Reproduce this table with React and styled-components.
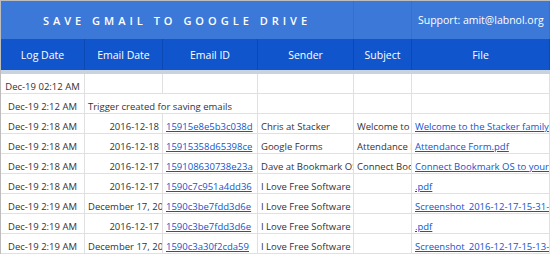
import React from 'react';
import styled, { createGlobalStyle } from 'styled-components';

const GlobalStyle = createGlobalStyle`
  html, body {
    margin: 0;
    padding: 0;
    background: #fff;
    overflow: hidden;
  }
  body {
    font-family: "Open Sans", "Liberation Sans", sans-serif;
  }
`;

const Sheet = styled.div`
  display: grid;
  grid-template-columns: 84px 78px 95px 96px 58px 1fr;
  width: 550px;
  border-top: 1px solid #bdbdbd;
  border-left: 1px solid #bdbdbd;
  box-sizing: border-box;
`;

const TitleCell = styled.div`
  grid-column: span ${props => props.span || 1};
  height: 38px;
  background: #3c78d8;
  color: #fff;
  display: flex;
  align-items: center;
  justify-content: ${props => props.left ? 'flex-start' : 'center'};
  padding: ${props => props.left ? '0 0 0 6px' : '0'};
  box-sizing: border-box;
  border-right: 1px solid #3a6fc6;
  font-size: ${props => props.left ? '10.5px' : '11px'};
  font-weight: ${props => props.left ? 400 : 600};
  letter-spacing: ${props => props.left ? '0' : '4px'};
  white-space: nowrap;
  overflow: hidden;
`;

const HeadCell = styled.div`
  height: 31px;
  background: #1155cc;
  color: #fff;
  display: flex;
  align-items: center;
  justify-content: center;
  font-size: 10.5px;
  border-right: 1px solid #0c49b4;
  box-sizing: border-box;
`;

const Band = styled.div`
  grid-column: 1 / -1;
  height: 4px;
  background: #c9d3e0;
`;

const Cell = styled.div`
  grid-column: span ${props => props.span || 1};
  height: 20px;
  box-sizing: border-box;
  border-right: 1px solid #e0e0e0;
  border-bottom: 1px solid #e0e0e0;
  font-size: 9.5px;
  line-height: 13px;
  color: #333;
  display: flex;
  align-items: flex-end;
  justify-content: ${props =>
    props.align === 'right' ? 'flex-end' : props.align === 'center' ? 'center' : 'flex-start'};
  padding: 0 3px;
  white-space: nowrap;
  overflow: hidden;
`;

const Link = styled.span`
  color: #1155cc;
  text-decoration: underline;
`;

const rows = [
  { log: 'Dec-19 02:12 AM' },
  { log: 'Dec-19 2:12 AM', note: 'Trigger created for saving emails' },
  { log: 'Dec-19 2:18 AM', date: '2016-12-18', id: '15915e8e5b3c038d', sender: 'Chris at Stacker', subject: 'Welcome to Stacker', file: 'Welcome to the Stacker family' },
  { log: 'Dec-19 2:18 AM', date: '2016-12-18', id: '15915358d65398ce', sender: 'Google Forms', subject: 'Attendance Form', file: 'Attendance Form.pdf' },
  { log: 'Dec-19 2:18 AM', date: '2016-12-17', id: '159108630738e23a', sender: 'Dave at Bookmark OS', subject: 'Connect Bookmark OS', file: 'Connect Bookmark OS to your browser' },
  { log: 'Dec-19 2:18 AM', date: '2016-12-17', id: '1590c7c951a4dd36', sender: 'I Love Free Software', file: '.pdf' },
  { log: 'Dec-19 2:19 AM', date: 'December 17, 2016', textDate: true, id: '1590c3be7fdd3d6e', sender: 'I Love Free Software', file: 'Screenshot_2016-12-17-15-31-49.png' },
  { log: 'Dec-19 2:19 AM', date: '2016-12-17', id: '1590c3be7fdd3d6e', sender: 'I Love Free Software', file: '.pdf' },
  { log: 'Dec-19 2:19 AM', date: 'December 17, 2016', textDate: true, id: '1590c3a30f2cda59', sender: 'I Love Free Software', file: 'Screenshot_2016-12-17-15-13-02.png' },
];

const headers = ['Log Date', 'Email Date', 'Email ID', 'Sender', 'Subject', 'File'];

export default function App() {
  return (
    <>
      <GlobalStyle />
      <Sheet>
        <TitleCell span={4}>SAVE GMAIL TO GOOGLE DRIVE</TitleCell>
        <TitleCell />
        <TitleCell left>Support: amit@labnol.org</TitleCell>

        {headers.map(h => <HeadCell key={h}>{h}</HeadCell>)}
        <Band />

        {rows.map((r, i) => (
          <React.Fragment key={i}>
            <Cell align="center">{r.log}</Cell>
            {r.note ? (
              <Cell span={2}>{r.note}</Cell>
            ) : (
              <>
                <Cell align={r.textDate ? 'left' : 'right'}>{r.date}</Cell>
                <Cell>{r.id && <Link>{r.id}</Link>}</Cell>
              </>
            )}
            <Cell>{r.sender}</Cell>
            <Cell>{r.subject}</Cell>
            <Cell>{r.file && <Link>{r.file}</Link>}</Cell>
          </React.Fragment>
        ))}
      </Sheet>
    </>
  );
}
